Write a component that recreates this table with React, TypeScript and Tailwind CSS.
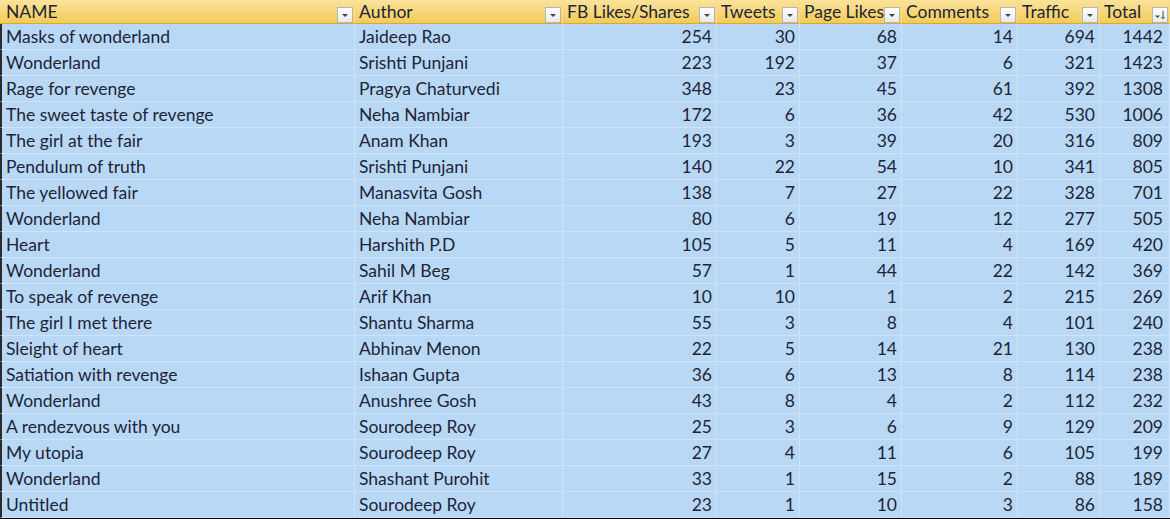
import React from "react";

type Row = [string, string, number, number, number, number, number, number];

const ROWS: Row[] = [
  ["Masks of wonderland", "Jaideep Rao", 254, 30, 68, 14, 694, 1442],
  ["Wonderland", "Srishti Punjani", 223, 192, 37, 6, 321, 1423],
  ["Rage for revenge", "Pragya Chaturvedi", 348, 23, 45, 61, 392, 1308],
  ["The sweet taste of revenge", "Neha Nambiar", 172, 6, 36, 42, 530, 1006],
  ["The girl at the fair", "Anam Khan", 193, 3, 39, 20, 316, 809],
  ["Pendulum of truth", "Srishti Punjani", 140, 22, 54, 10, 341, 805],
  ["The yellowed fair", "Manasvita Gosh", 138, 7, 27, 22, 328, 701],
  ["Wonderland", "Neha Nambiar", 80, 6, 19, 12, 277, 505],
  ["Heart", "Harshith P.D", 105, 5, 11, 4, 169, 420],
  ["Wonderland", "Sahil M Beg", 57, 1, 44, 22, 142, 369],
  ["To speak of revenge", "Arif Khan", 10, 10, 1, 2, 215, 269],
  ["The girl I met there", "Shantu Sharma", 55, 3, 8, 4, 101, 240],
  ["Sleight of heart", "Abhinav Menon", 22, 5, 14, 21, 130, 238],
  ["Satiation with revenge", "Ishaan Gupta", 36, 6, 13, 8, 114, 238],
  ["Wonderland", "Anushree Gosh", 43, 8, 4, 2, 112, 232],
  ["A rendezvous with you", "Sourodeep Roy", 25, 3, 6, 9, 129, 209],
  ["My utopia", "Sourodeep Roy", 27, 4, 11, 6, 105, 199],
  ["Wonderland", "Shashant Purohit", 33, 1, 15, 2, 88, 189],
  ["Untitled", "Sourodeep Roy", 23, 1, 10, 3, 86, 158],
];

const HEADERS = ["NAME", "Author", "FB Likes/Shares", "Tweets", "Page Likes", "Comments", "Traffic", "Total"];

function FilterButton({ sorted }: { sorted?: boolean }) {
  return (
    <span className="absolute right-px top-[7px] w-4 h-4 flex items-center justify-center bg-gradient-to-b from-white to-[#e9e9e9] border border-[#b5b5b5]">
      {sorted ? (
        <svg width="12" height="10" viewBox="0 0 12 10">
          <path d="M1 5.5 L3.5 8 L6 5.5 Z" fill="#444" />
          <path d="M9 1 V8.5 M7.5 7 L9 8.7 L10.5 7" stroke="#444" strokeWidth="1" fill="none" />
        </svg>
      ) : (
        <svg width="8" height="5" viewBox="0 0 8 5">
          <path d="M1 1 L4 4 L7 1 Z" fill="#444" />
        </svg>
      )}
    </span>
  );
}

export default function App() {
  return (
    <div
      className="w-[1170px] h-[519px] overflow-hidden bg-[#b9d8f6] text-[#1c2536] text-[17.5px] leading-none"
      style={{ fontFamily: "Lato, 'Open Sans', sans-serif" }}
    >
      <div className="grid grid-cols-[355px_208px_154px_83px_102px_116px_82px_70px] border-b-2 border-black">
        {HEADERS.map((h, i) => (
          <div
            key={h}
            className={`relative h-6 flex items-center pl-1 bg-gradient-to-b from-[#fbe39b] to-[#f3cb55] border-b border-[#d8a83c] border-r border-r-[#f8dc8a] ${i === 0 ? "pl-[6px]" : ""}`}
          >
            <span className="whitespace-nowrap">{h}</span>
            <FilterButton sorted={i === 7} />
          </div>
        ))}
        {ROWS.map((r, ri) =>
          r.map((v, ci) => (
            <div
              key={`${ri}-${ci}`}
              className={`h-[26px] flex items-center whitespace-nowrap border-b border-r border-[#cfe3f8] ${
                ci < 2 ? "justify-start pl-1" : "justify-end pr-1"
              } ${ci === 0 ? "pl-[4px] border-l-2 border-l-[#2b2b2b]" : ""} ${ci === 7 ? "pr-[6px]" : ""}`}
            >
              {v}
            </div>
          ))
        )}
      </div>
    </div>
  );
}
